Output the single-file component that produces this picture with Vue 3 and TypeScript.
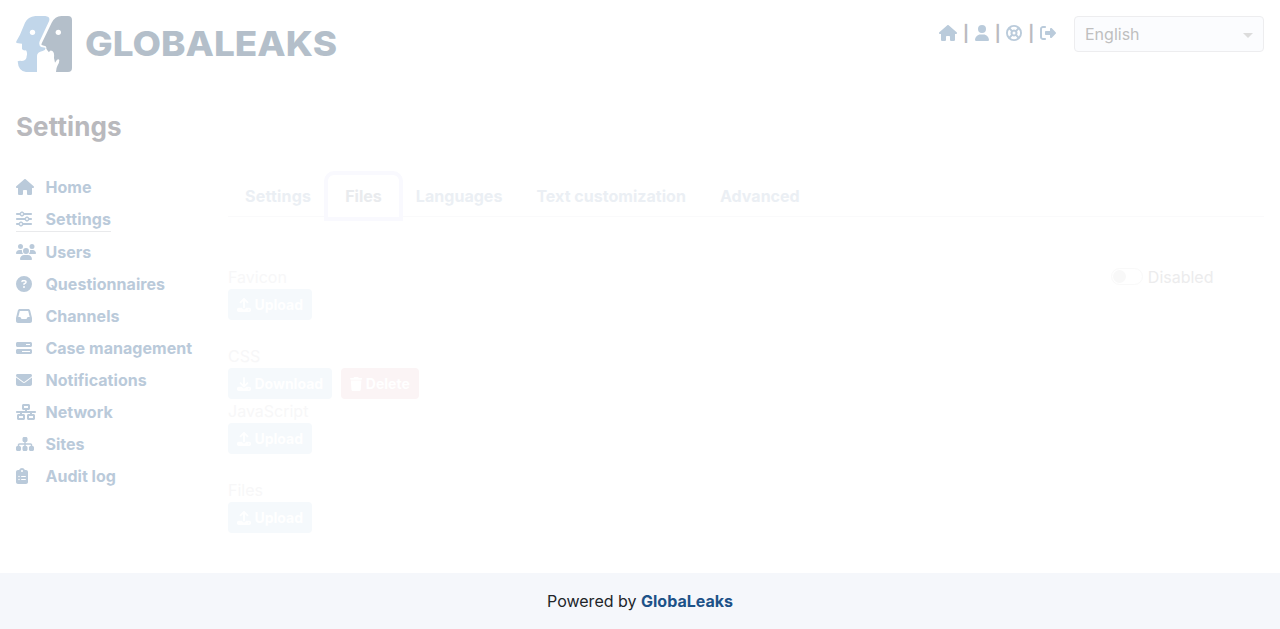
<script setup lang="ts">
interface Icon { w: number; d: string }

const icons: Record<string, Icon> = {
  home: { w: 576, d: 'M575.8 255.5c0 18-15 32.1-32 32.1l-32 0 .7 160.2c0 2.7-.2 5.4-.5 8.1l0 16.2c0 22.1-17.9 40-40 40l-16 0c-1.1 0-2.2 0-3.3-.1c-1.4 .1-2.8 .1-4.2 .1L416 512l-24 0c-22.1 0-40-17.9-40-40l0-24 0-64c0-17.7-14.3-32-32-32l-64 0c-17.7 0-32 14.3-32 32l0 64 0 24c0 22.1-17.9 40-40 40l-24 0-31.9 0c-1.5 0-3-.1-4.5-.2c-1.2 .1-2.4 .2-3.6 .2l-16 0c-22.1 0-40-17.9-40-40l0-112c0-.9 0-1.9 .1-2.8l0-69.7-32 0c-18 0-32-14-32-32.1c0-9 3-17 10-24L266.4 8c7-7 15-8 22-8s15 2 21 7L564.8 231.5c8 7 12 15 11 24z' },
  user: { w: 448, d: 'M224 256A128 128 0 1 0 224 0a128 128 0 1 0 0 256zm-45.7 48C79.8 304 0 383.8 0 482.3C0 498.7 13.3 512 29.7 512l388.6 0c16.4 0 29.7-13.3 29.7-29.7C448 383.8 368.2 304 269.7 304l-91.4 0z' },
  ring: { w: 512, d: 'M256 0A256 256 0 1 1 256 512A256 256 0 1 1 256 0zM367.2 412.5A192 192 0 0 1 144.8 412.5l58-58a112 112 0 0 0 106.4 0zM367.2 99.5A192 192 0 0 0 144.8 99.5l58 58a112 112 0 0 1 106.4 0zM412.5 367.2A192 192 0 0 0 412.5 144.8l-58 58a112 112 0 0 1 0 106.4zM99.5 367.2A192 192 0 0 1 99.5 144.8l58 58a112 112 0 0 0 0 106.4zM208 256a48 48 0 1 0 96 0a48 48 0 1 0-96 0z' },
  logout: { w: 512, d: 'M377.9 105.9L500.7 228.7c7.2 7.2 11.3 17.1 11.3 27.3s-4.1 20.1-11.3 27.3L377.9 406.1c-6.4 6.4-15 9.9-24 9.9c-18.7 0-33.9-15.2-33.9-33.9l0-62.1-128 0c-17.7 0-32-14.3-32-32l0-64c0-17.7 14.3-32 32-32l128 0 0-62.1c0-18.7 15.2-33.9 33.9-33.9c9 0 17.6 3.6 24 9.9zM160 96L96 96c-17.7 0-32 14.3-32 32l0 256c0 17.7 14.3 32 32 32l64 0c17.7 0 32 14.3 32 32s-14.3 32-32 32l-64 0c-53 0-96-43-96-96L0 128C0 75 43 32 96 32l64 0c17.7 0 32 14.3 32 32s-14.3 32-32 32z' },
  sliders: { w: 512, d: 'M0 416c0 17.7 14.3 32 32 32l54.7 0c12.3 28.3 40.5 48 73.3 48s61-19.7 73.3-48L480 448c17.7 0 32-14.3 32-32s-14.3-32-32-32l-246.7 0c-12.3-28.3-40.5-48-73.3-48s-61 19.7-73.3 48L32 384c-17.7 0-32 14.3-32 32zm128 0a32 32 0 1 1 64 0 32 32 0 1 1 -64 0zM320 256a32 32 0 1 1 64 0 32 32 0 1 1 -64 0zm32-80c-32.8 0-61 19.7-73.3 48L32 224c-17.7 0-32 14.3-32 32s14.3 32 32 32l246.7 0c12.3 28.3 40.5 48 73.3 48s61-19.7 73.3-48l54.7 0c17.7 0 32-14.3 32-32s-14.3-32-32-32l-54.7 0c-12.3-28.3-40.5-48-73.3-48zM192 128a32 32 0 1 1 0-64 32 32 0 1 1 0 64zm73.3-64C253 35.7 224.8 16 192 16s-61 19.7-73.3 48L32 64C14.3 64 0 78.3 0 96s14.3 32 32 32l86.7 0c12.3 28.3 40.5 48 73.3 48s61-19.7 73.3-48L480 128c17.7 0 32-14.3 32-32s-14.3-32-32-32L265.3 64z' },
  users: { w: 640, d: 'M144 0a80 80 0 1 1 0 160A80 80 0 1 1 144 0zM512 0a80 80 0 1 1 0 160A80 80 0 1 1 512 0zM0 298.7C0 239.8 47.8 192 106.7 192l42.7 0c15.9 0 31 3.5 44.6 9.7c-1.3 7.2-1.9 14.7-1.9 22.3c0 38.2 16.8 72.5 43.3 96c-.2 0-.4 0-.7 0L21.3 320C9.6 320 0 310.4 0 298.7zM405.3 320c-.2 0-.4 0-.7 0c26.6-23.5 43.3-57.8 43.3-96c0-7.6-.7-15-1.9-22.3c13.6-6.3 28.7-9.7 44.6-9.7l42.7 0C592.2 192 640 239.8 640 298.7c0 11.8-9.6 21.3-21.3 21.3l-213.3 0zM224 224a96 96 0 1 1 192 0 96 96 0 1 1 -192 0zM128 485.3C128 411.7 187.7 352 261.3 352l117.3 0C452.3 352 512 411.7 512 485.3c0 14.7-11.9 26.7-26.7 26.7l-330.7 0c-14.7 0-26.7-11.9-26.7-26.7z' },
  question: { w: 512, d: 'M256 512A256 256 0 1 0 256 0a256 256 0 1 0 0 512zM169.8 165.3c7.9-22.3 29.1-37.3 52.8-37.3l58.3 0c34.9 0 63.1 28.3 63.1 63.1c0 22.6-12.1 43.5-31.7 54.8L280 264.4c-.2 13-10.9 23.6-24 23.6c-13.3 0-24-10.7-24-24l0-13.5c0-8.6 4.6-16.5 12.1-20.8l44.3-25.4c4.7-2.7 7.6-7.7 7.6-13.1c0-8.4-6.8-15.1-15.1-15.1l-58.3 0c-3.4 0-6.4 2.1-7.5 5.3l-.4 1.2c-4.4 12.5-18.2 19-30.6 14.6s-19-18.2-14.6-30.6l.4-1.2zM224 352a32 32 0 1 1 64 0 32 32 0 1 1 -64 0z' },
  inbox: { w: 512, d: 'M121 32C91.6 32 66 52 58.9 80.5L1.9 308.4C.6 313.5 0 318.7 0 323.9L0 416c0 35.3 28.7 64 64 64l384 0c35.3 0 64-28.7 64-64l0-92.1c0-5.2-.6-10.4-1.9-15.5l-57-227.9C446 52 420.4 32 391 32L121 32zm0 64l270 0 48 192-51.2 0c-12.1 0-23.2 6.8-28.6 17.7l-14.3 28.6c-5.4 10.8-16.5 17.7-28.6 17.7l-120.4 0c-12.1 0-23.2-6.8-28.6-17.7l-14.3-28.6c-5.4-10.8-16.5-17.7-28.6-17.7L73 288 121 96z' },
  bars: { w: 512, d: 'M448 160l-128 0 0-32 128 0 0 32zM48 64C21.5 64 0 85.5 0 112l0 64c0 26.5 21.5 48 48 48l416 0c26.5 0 48-21.5 48-48l0-64c0-26.5-21.5-48-48-48L48 64zM448 352l0 32-256 0 0-32 256 0zM48 288c-26.5 0-48 21.5-48 48l0 64c0 26.5 21.5 48 48 48l416 0c26.5 0 48-21.5 48-48l0-64c0-26.5-21.5-48-48-48L48 288z' },
  envelope: { w: 512, d: 'M48 64C21.5 64 0 85.5 0 112c0 15.1 7.1 29.3 19.2 38.4L236.8 313.6c11.4 8.5 27 8.5 38.4 0L492.8 150.4c12.1-9.1 19.2-23.3 19.2-38.4c0-26.5-21.5-48-48-48L48 64zM0 176L0 384c0 35.3 28.7 64 64 64l384 0c35.3 0 64-28.7 64-64l0-208L294.4 339.2c-22.8 17.1-54 17.1-76.8 0L0 176z' },
  network: { w: 640, d: 'M256 64l128 0 0 64-128 0 0-64zM240 0c-26.5 0-48 21.5-48 48l0 96c0 26.5 21.5 48 48 48l48 0 0 32L32 224c-17.7 0-32 14.3-32 32s14.3 32 32 32l96 0 0 32-48 0c-26.5 0-48 21.5-48 48l0 96c0 26.5 21.5 48 48 48l160 0c26.5 0 48-21.5 48-48l0-96c0-26.5-21.5-48-48-48l-48 0 0-32 256 0 0 32-48 0c-26.5 0-48 21.5-48 48l0 96c0 26.5 21.5 48 48 48l160 0c26.5 0 48-21.5 48-48l0-96c0-26.5-21.5-48-48-48l-48 0 0-32 96 0c17.7 0 32-14.3 32-32s-14.3-32-32-32l-256 0 0-32 48 0c26.5 0 48-21.5 48-48l0-96c0-26.5-21.5-48-48-48L240 0zM96 448l0-64 128 0 0 64L96 448zm320-64l128 0 0 64-128 0 0-64z' },
  sitemap: { w: 576, d: 'M208 80c0-26.5 21.5-48 48-48l64 0c26.5 0 48 21.5 48 48l0 64c0 26.5-21.5 48-48 48l-8 0 0 40 152 0c30.9 0 56 25.1 56 56l0 32 8 0c26.5 0 48 21.5 48 48l0 64c0 26.5-21.5 48-48 48l-64 0c-26.5 0-48-21.5-48-48l0-64c0-26.5 21.5-48 48-48l8 0 0-32c0-4.4-3.6-8-8-8l-152 0 0 40 8 0c26.5 0 48 21.5 48 48l0 64c0 26.5-21.5 48-48 48l-64 0c-26.5 0-48-21.5-48-48l0-64c0-26.5 21.5-48 48-48l8 0 0-40-152 0c-4.4 0-8 3.6-8 8l0 32 8 0c26.5 0 48 21.5 48 48l0 64c0 26.5-21.5 48-48 48l-64 0c-26.5 0-48-21.5-48-48l0-64c0-26.5 21.5-48 48-48l8 0 0-32c0-30.9 25.1-56 56-56l152 0 0-40-8 0c-26.5 0-48-21.5-48-48l0-64z' },
  clipboard: { w: 384, d: 'M192 0c-41.8 0-77.4 26.7-90.5 64L64 64C28.7 64 0 92.7 0 128L0 448c0 35.3 28.7 64 64 64l256 0c35.3 0 64-28.7 64-64l0-320c0-35.3-28.7-64-64-64l-37.5 0C269.4 26.7 233.8 0 192 0zm0 64a32 32 0 1 1 0 64 32 32 0 1 1 0-64zM72 272a24 24 0 1 1 48 0 24 24 0 1 1 -48 0zm104-16l128 0c8.8 0 16 7.2 16 16s-7.2 16-16 16l-128 0c-8.8 0-16-7.2-16-16s7.2-16 16-16zM72 368a24 24 0 1 1 48 0 24 24 0 1 1 -48 0zm88 0c0-8.8 7.2-16 16-16l128 0c8.8 0 16 7.2 16 16s-7.2 16-16 16l-128 0c-8.8 0-16-7.2-16-16z' },
  upload: { w: 512, d: 'M288 109.3L288 352c0 17.7-14.3 32-32 32s-32-14.3-32-32l0-242.7-73.4 73.4c-12.5 12.5-32.8 12.5-45.3 0s-12.5-32.8 0-45.3l128-128c12.5-12.5 32.8-12.5 45.3 0l128 128c12.5 12.5 12.5 32.8 0 45.3s-32.8 12.5-45.3 0L288 109.3zM64 352l128 0c0 35.3 28.7 64 64 64s64-28.7 64-64l128 0c35.3 0 64 28.7 64 64l0 32c0 35.3-28.7 64-64 64L64 512c-35.3 0-64-28.7-64-64l0-32c0-35.3 28.7-64 64-64zM432 456a24 24 0 1 0 0-48 24 24 0 1 0 0 48z' },
  download: { w: 512, d: 'M288 32c0-17.7-14.3-32-32-32s-32 14.3-32 32l0 242.7-73.4-73.4c-12.5-12.5-32.8-12.5-45.3 0s-12.5 32.8 0 45.3l128 128c12.5 12.5 32.8 12.5 45.3 0l128-128c12.5-12.5 12.5-32.8 0-45.3s-32.8-12.5-45.3 0L288 274.7 288 32zM64 352c-35.3 0-64 28.7-64 64l0 32c0 35.3 28.7 64 64 64l384 0c35.3 0 64-28.7 64-64l0-32c0-35.3-28.7-64-64-64l-101.5 0-45.3 45.3c-25 25-65.5 25-90.5 0L165.5 352 64 352zm368 56a24 24 0 1 1 0 48 24 24 0 1 1 0-48z' },
  trash: { w: 448, d: 'M135.2 17.7L128 32 32 32C14.3 32 0 46.3 0 64S14.3 96 32 96l384 0c17.7 0 32-14.3 32-32s-14.3-32-32-32l-96 0-7.2-14.3C307.4 6.8 296.3 0 284.2 0L163.8 0c-12.1 0-23.2 6.8-28.6 17.7zM416 128L32 128 53.2 467c1.6 25.3 22.6 45 47.9 45l245.8 0c25.3 0 46.3-19.7 47.9-45L416 128z' },
}

const box = (name: string) => `0 0 ${icons[name].w} 512`

const headerIcons = ['home', 'user', 'ring', 'logout']

const nav = [
  { icon: 'home', label: 'Home' },
  { icon: 'sliders', label: 'Settings', active: true },
  { icon: 'users', label: 'Users' },
  { icon: 'question', label: 'Questionnaires' },
  { icon: 'inbox', label: 'Channels' },
  { icon: 'bars', label: 'Case management' },
  { icon: 'envelope', label: 'Notifications' },
  { icon: 'network', label: 'Network' },
  { icon: 'sitemap', label: 'Sites' },
  { icon: 'clipboard', label: 'Audit log' },
]

const tabs = ['Settings', 'Files', 'Languages', 'Text customization', 'Advanced']

const upload = { icon: 'upload', label: 'Upload', danger: false }
const groups = [
  { label: 'Favicon', tight: false, buttons: [upload] },
  { label: 'CSS', tight: true, buttons: [
    { icon: 'download', label: 'Download', danger: false },
    { icon: 'trash', label: 'Delete', danger: true },
  ] },
  { label: 'JavaScript', tight: false, buttons: [upload] },
  { label: 'Files', tight: false, buttons: [upload] },
]
</script>

<template>
  <div class="page">
    <header class="header">
      <svg class="logo" width="322" height="56" viewBox="0 0 322 56">
        <g transform="scale(.33333) translate(-48 -48)">
          <path fill="#c1d6ea" d="M106 48H136Q152 50 147 64L119 124Q115 137 124 141L136 143Q138 151 128 153Q111 156 111 168V216H78Q55 214 53 184Q58 181 66 183Q80 182 80 168Q83 158 78 151Q68 152 66 147V131L50 129Q47 127 50 122L60 104L75 68Q84 50 106 48Z" />
          <path fill="#b4bfca" d="M184 48H204Q216 48 216 60V204Q216 216 204 216H168Q168 205 173 196Q178 188 178 180Q175 175 170 181L165 188L162 174Q164 158 157 153Q150 148 147 157Q142 151 139 146Q140 137 132 137L125 135Q123 133 126 128L155 68Q165 49 184 48Z" />
          <circle cx="97.5" cy="97" r="8" fill="#fff" />
          <circle cx="175" cy="97" r="8" fill="#fff" />
        </g>
        <text class="wordmark" x="69" y="40.3" textLength="252" lengthAdjust="spacingAndGlyphs">GLOBALEAKS</text>
      </svg>
      <div class="tools">
        <div class="links">
          <template v-for="(name, i) in headerIcons" :key="name">
            <span v-if="i" class="sep">|</span>
            <svg class="icon" :viewBox="box(name)"><path fill-rule="evenodd" :d="icons[name].d" /></svg>
          </template>
        </div>
        <div class="select"><span>English</span><i class="caret"></i></div>
      </div>
    </header>

    <h1 class="title">Settings</h1>

    <div class="body">
      <nav class="nav">
        <a v-for="item in nav" :key="item.label" class="nav-item" :class="{ active: item.active }">
          <span class="nav-icon"><svg class="icon" :viewBox="box(item.icon)"><path :d="icons[item.icon].d" /></svg></span>
          <span>{{ item.label }}</span>
        </a>
      </nav>

      <main class="main">
        <div class="tabs">
          <div v-for="tab in tabs" :key="tab" class="tab" :class="{ current: tab === 'Files' }">{{ tab }}</div>
        </div>
        <div class="content">
          <div class="groups">
            <section v-for="group in groups" :key="group.label" class="group" :class="{ tight: group.tight }">
              <div class="label">{{ group.label }}</div>
              <div class="buttons">
                <button v-for="b in group.buttons" :key="b.label" class="btn" :class="{ danger: b.danger }">
                  <svg class="icon" :viewBox="box(b.icon)"><path :d="icons[b.icon].d" /></svg><span>{{ b.label }}</span>
                </button>
              </div>
            </section>
          </div>
          <div class="switch"><span class="track"><span class="knob"></span></span><span>Disabled</span></div>
        </div>
      </main>
    </div>

    <footer class="footer"><span>Powered by <b>GlobaLeaks</b></span></footer>
  </div>
</template>

<style>
body { margin: 0; background: #fff; }
</style>

<style scoped>
.page { box-sizing: border-box; height: 629px; display: flex; flex-direction: column; overflow: hidden; font: 16px/24px Inter, "Noto Sans", sans-serif; color: #212529; }
.icon { display: block; height: 1em; flex: none; fill: currentColor; }
.header { display: flex; justify-content: space-between; align-items: flex-start; height: 56px; padding: 16px 16px 0; }
.logo { display: block; }
.wordmark { font: 800 34.5px Inter, sans-serif; fill: #b4bfca; }
.tools { display: flex; gap: 18px; }
.links { display: flex; align-items: center; height: 34px; color: #bacbdb; }
.sep { width: 17.6px; text-align: center; font-weight: 700; color: #babac0; }
.select { box-sizing: border-box; width: 190px; height: 36px; padding: 0 10px; display: flex; align-items: center; justify-content: space-between; border: 1px solid #ededef; border-radius: 4px; background: #fbfcfe; color: #bfbfbf; }
.caret { border: 5px solid transparent; border-top-color: #dcdcdc; border-bottom: 0; margin-top: 2px; }
.title { margin: 39px 16px 1px; font-size: 26px; line-height: 31px; font-weight: 700; color: #b9b9bd; letter-spacing: 0.1px; }
.body { display: flex; padding: 32px 16px 0; flex: 1; }
.nav { width: 212px; display: flex; flex-direction: column; align-items: flex-start; gap: 8px; color: #bacada; font-weight: 700; letter-spacing: 0.04px; }
.nav-item { display: flex; align-items: center; }
.nav-item.active { border-bottom: 1px solid #e9eaec; letter-spacing: 0.16px; }
.nav-icon { width: 29.4px; }
.main { flex: 1; }
.tabs { display: flex; border-bottom: 1px solid #fafafb; }
.tab { padding: 8px 16px; margin-bottom: -1px; border: 1px solid transparent; border-radius: 6px 6px 0 0; font-weight: 700; color: #ebeff4; letter-spacing: 0.03px; }
.tab:first-child { letter-spacing: 0.2px; }
.tab.current { color: #e9ebee; background: #fff; box-shadow: 0 0 0 4px #f9f9fe; }
.content { display: flex; justify-content: space-between; padding: 48px 50.5px 0 0; }
.group { margin-bottom: 24px; }
.group.tight { margin-bottom: 0; }
.label { color: #f7f7f8; }
.buttons { display: flex; gap: 9px; }
.btn { display: flex; align-items: center; gap: 3.5px; height: 31px; padding: 0 9px; border: 0; border-radius: 4px; background: #f5f9fc; color: #fff; font: 700 14px/21px Inter, sans-serif; }
.btn.danger { background: #fbf4f5; }
.switch { display: flex; align-items: center; height: 24px; gap: 5px; color: #ececed; }
.track { box-sizing: border-box; width: 32px; height: 17px; margin-top: -1px; border: 1px solid #f9f9f9; border-radius: 9px; padding: 1px; }
.knob { display: block; width: 13px; height: 13px; border-radius: 50%; background: #f8f8f8; }
.footer { height: 56px; display: flex; align-items: center; justify-content: center; background: #f5f7fb; }
.footer b { font-weight: 700; color: #1d5288; }
</style>
